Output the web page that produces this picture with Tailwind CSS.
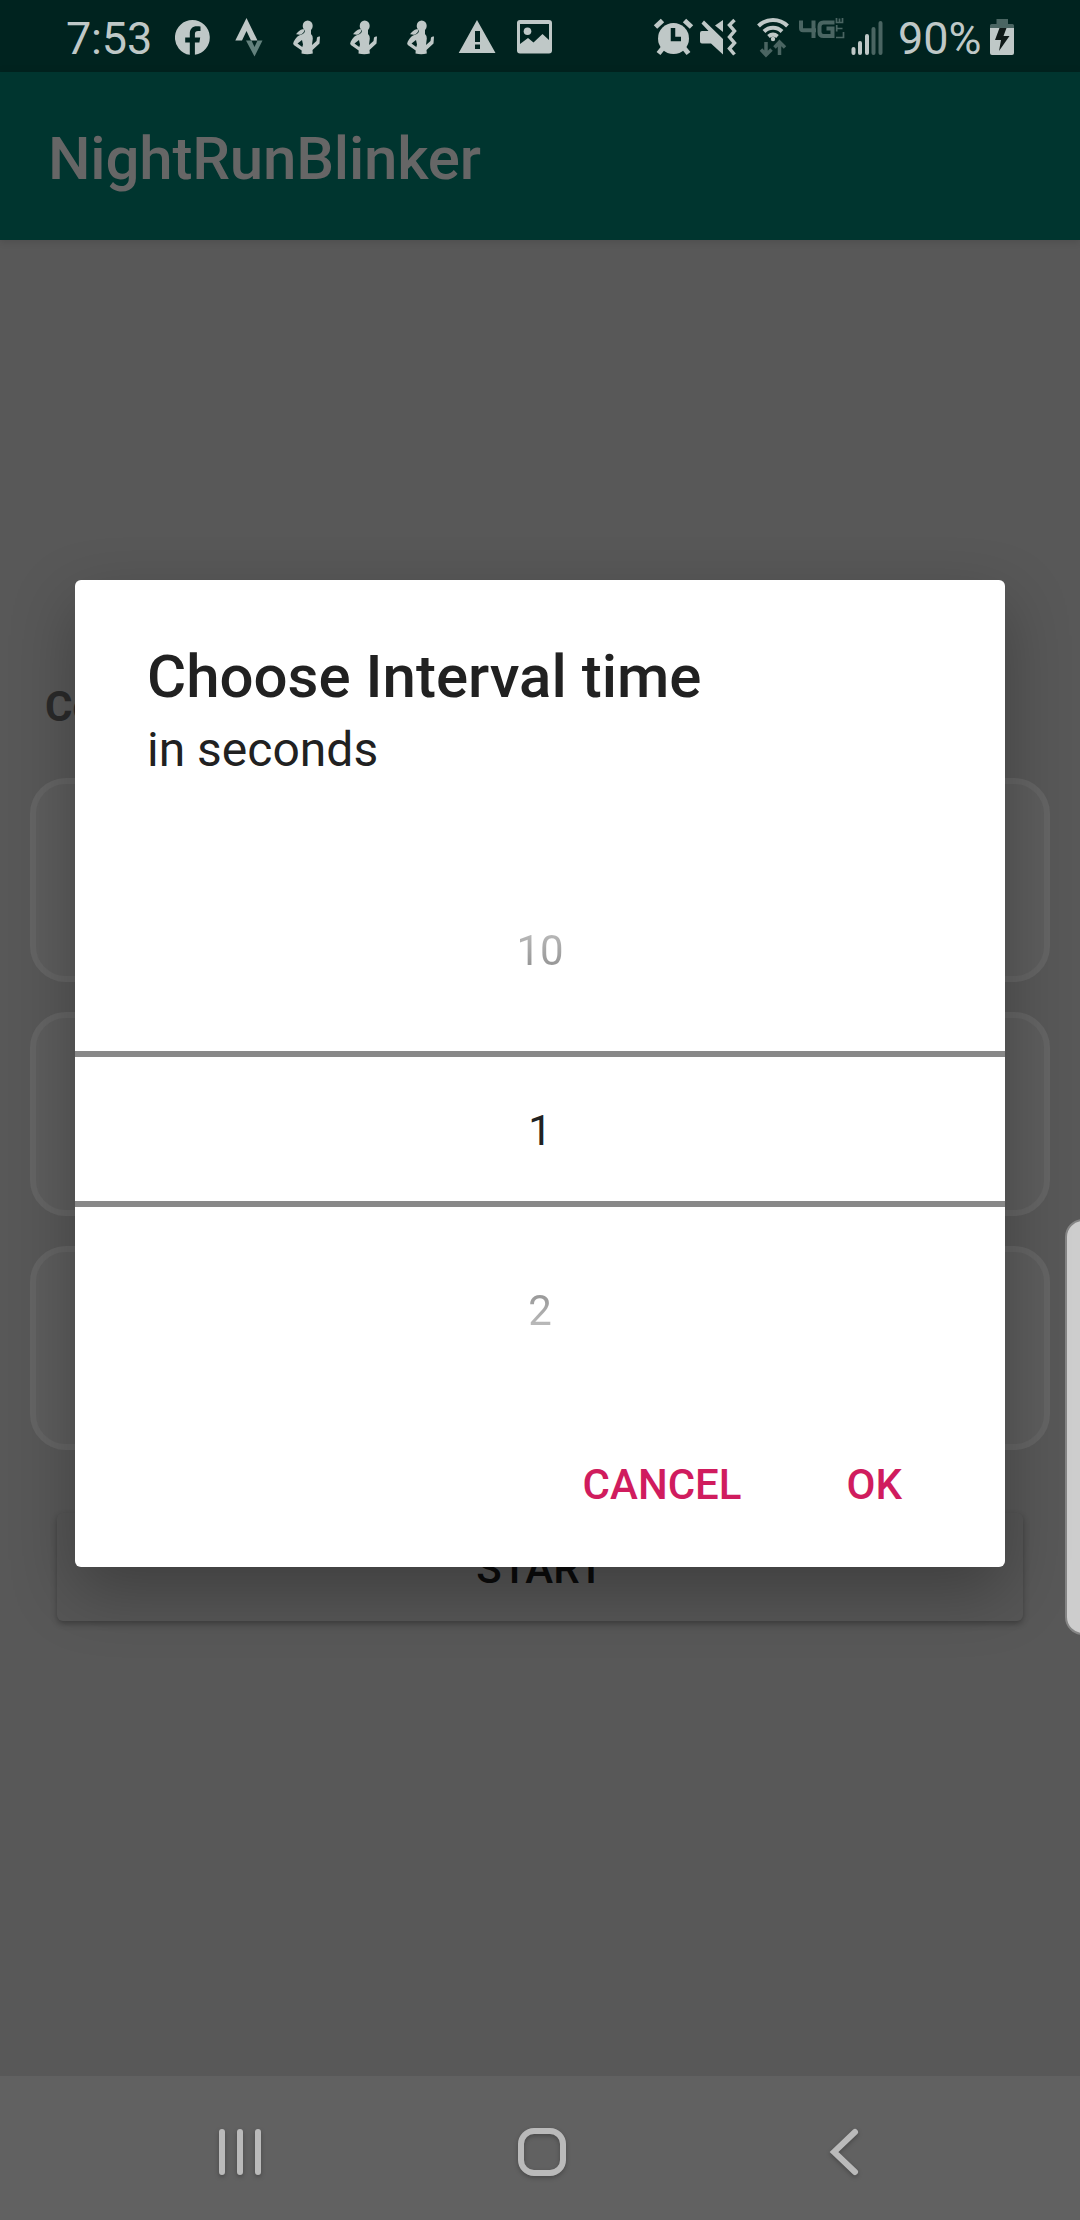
<!DOCTYPE html>
<html lang="en">
<head>
<meta charset="utf-8">
<title>NightRunBlinker</title>
<script src="https://cdn.jsdelivr.net/npm/@tailwindcss/browser@4"></script>
</head>
<body class="w-[1080px] h-[2220px] overflow-hidden bg-[#585858] font-[Roboto,sans-serif]">
<div class="relative flex h-[2220px] w-[1080px] flex-col overflow-hidden">
  <!-- Status bar -->
  <header class="flex h-[72px] shrink-0 bg-[#00231f] text-[#bfc8c7]">
    <div class="flex pl-[66px] w-[640px]">
      <span class="w-[109px] text-[45px] leading-[77px] tracking-[-0.2px]">7:53</span>
      <svg class="w-[465px] h-[72px] shrink-0" viewBox="175 0 465 72" fill="#bfc8c7">
        <path d="M192.500 20a17.500 17.500 0 0 0-2.700 34.800V42.500h-4.600v-5h4.600v-4c0-4.600 2.700-7.200 7-7.200 1.300 0 2.700.1 3.700.3v4.500h-2.400c-2.200 0-3.200 1.200-3.200 2.900v3.500h5.300l-.8 5h-4.500v12.300A17.500 17.500 0 0 0 192.500 20z"/>
        <path d="M246.500 18l11 22.500h-6.500l-4.500-9.500-4.500 9.500h-6.700z"/>
        <path fill="#63817d" d="M246 40.500h5.500l3 6.500 3-6.500h5l-8 16z"/>
        <defs>
          <g id="runner">
            <ellipse cx="14.700" cy="5.400" rx="5" ry="5.400"/>
            <path d="M10.500 8.500l1 1.500c-1 2.500-3 4.300-5 4.200-1.200 0-2-.8-3.500-.4 1.500-2 3.500-4.600 7.500-5.300z"/>
            <path fill-rule="evenodd" d="M12 9h6v4.500q2 1.500 1.800 4.500l-.8 6.500 4.500-4 .5-3.500q1.500-1.500 3-1l-.5 7-7 6.500.3 3.500q-5.500 1.300-11.300 0l.2-3L.8 24.500Q-.5 23 .8 21 4 15 8 14.200 12 13.500 12 9zM9 19.500l-4.500 3.600 4.800 3.400.7-2.500z"/>
          </g>
        </defs>
        <use href="#runner" x="293" y="20.500"/>
        <use href="#runner" x="350" y="20.500"/>
        <use href="#runner" x="407" y="20.500"/>
        <path fill-rule="evenodd" d="M477 20L495.500 53h-36.800zM475 31v11h5V31zm0 13.500v4.500h5v-4.500z"/>
        <path fill-rule="evenodd" d="M520 20h29q3 0 3 3v27.500q0 3-3 3h-29q-3 0-3-3V23q0-3 3-3zm0 4v20l8-6 5.500 4.500 9-8.500 6.500 6V24z"/>
        <circle cx="527.500" cy="31.200" r="3.800"/>
      </svg>
    </div>
    <svg class="h-[72px] w-[255px] shrink-0" viewBox="640 0 255 72" fill="#bfc8c7">
      <circle cx="673.500" cy="38.500" r="15.500"/>
      <path d="M655.500 27l7-6.500m22 0l7 6.500M663 48l-4.500 5.500M684 48l4.500 5.500" stroke="#bfc8c7" stroke-width="5" fill="none"/>
      <path d="M673 28v11h8" stroke="#00231f" stroke-width="4.500" fill="none"/>
      <path d="M704 20.500L723 39v15.500L711 43.500h-9q-2 0-2-2V33q0-2 2-2h6.500l-7-7.500zM723 20v12l-8-6.500z"/>
      <path d="M734.500 20l-5 5 5 6-5 6 5 6-5 5.500 5 6" stroke="#bfc8c7" stroke-width="3.500" fill="none"/>
      <g fill="none" stroke="#bfc8c7" stroke-width="4">
        <path d="M758.500 26c8-8 21-8 29 0M764 31.500c5-5 13-5 18 0M768.500 36.500c3-2.500 6-2.500 9 0"/>
      </g>
      <circle cx="773" cy="39" r="2.200"/>
      <path d="M766 42v13m-5-5.500l5 5.500 5.500-5.500M779.500 55V42m-5 5.500l5-5.500 5.500 5.500" stroke="#4a6562" stroke-width="3.500" fill="none"/>
      <g fill="none" stroke="#4a6562" stroke-width="4">
        <path d="M801 20.500v7.700q0 2 2 2h13M813.500 20.500V38M834.500 22.500h-11q-4 0-4 4V32q0 4 4 4h9v-7.500h-6"/>
      </g>
      <path d="M836 37.500h7.500v-5.500M836 28.500h6.500M836.700 25v6.500M836.500 18v4.500h6V18m-3 4.500v-4" stroke="#4a6562" stroke-width="1.700" fill="none"/>
      <g stroke-width="4" stroke-linecap="round">
        <path d="M853.500 49v4M860 43v10M867 36v17" stroke="#bfc8c7"/>
        <path d="M873.500 29v24M880.500 23v30" stroke="#4a6562"/>
      </g>
    </svg>
    <span class="ml-[3px] w-[89px] text-[45px] leading-[77px] tracking-[-0.1px]">90%</span>
    <svg class="h-[72px] w-[40px]" viewBox="987 0 40 72">
      <path fill="#4a6562" d="M996.500 19H1008v5h4.500q1.500 0 1.500 1.500V28h-24v-2.500q0-1.500 1.500-1.500h5z"/>
      <path fill="#bfc8c7" d="M990 28h24v25q0 2-2 2h-20q-2 0-2-2z"/>
      <path fill="#101a18" d="M999.500 28h7l-3 8h6l-10.500 15 2-11h-6z"/>
    </svg>
  </header>
  <!-- App bar -->
  <div class="flex h-[168px] shrink-0 items-center bg-[#00352f] pl-[48px] pt-[5px] shadow-[0_1px_8px_rgba(0,0,0,0.15)]">
    <h1 class="text-[60px] font-medium leading-[70px] tracking-[-0.2px] text-[#666]">NightRunBlinker</h1>
  </div>
  <!-- Activity content behind the dialog -->
  <main class="flex flex-1 flex-col px-[30px] pt-[442px]">
    <p class="pl-[15px] text-[42px] font-bold leading-[50px] text-[#2a2a2a]">Co</p>
    <div class="mt-[46px] flex flex-col gap-[30px]">
      <div class="h-[204px] rounded-[36px] border-[6px] border-[#646464] bg-[#5d5d5d]"></div>
      <div class="h-[204px] rounded-[36px] border-[6px] border-[#646464] bg-[#5d5d5d]"></div>
      <div class="h-[204px] rounded-[36px] border-[6px] border-[#646464] bg-[#5d5d5d]"></div>
    </div>
    <button class="mx-[27px] mt-[63px] h-[108px] rounded-[6px] bg-[#565656] pt-[2px] text-[42px] font-medium text-[#0b0b0b] shadow-[0_3px_6px_rgba(0,0,0,0.3)]">START</button>
  </main>
  <!-- Navigation bar -->
  <nav class="flex h-[144px] shrink-0 items-center bg-[#616161]">
    <svg class="h-[144px] w-[1080px]" viewBox="0 0 1080 144" fill="none" stroke="#bababa" stroke-width="6">
      <g class="drop-shadow-[0_2px_2px_rgba(0,0,0,0.25)]">
        <path d="M222 56v40M240 56v40M258 56v40" stroke-linecap="round"/>
        <rect x="521" y="55" width="42" height="42" rx="13"/>
        <path d="M855 56L834 76l21 20" stroke-linecap="round"/>
      </g>
    </svg>
  </nav>
  <!-- Edge panel handle -->
  <div class="absolute left-[1065px] top-[1219px] h-[416px] w-[40px] rounded-[18px] border-2 border-[#858585] bg-[#cdcdcd]"></div>
  <!-- Dialog -->
  <div role="dialog" class="absolute left-[75px] top-[580px] flex h-[987px] w-[930px] flex-col rounded-[6px] bg-white text-[#212121] shadow-[0_24px_64px_rgba(0,0,0,0.28)]">
    <h2 class="mt-[62px] pl-[72px] text-[60px] font-medium leading-[70px]">Choose Interval time</h2>
    <p class="mt-[10px] pl-[72px] text-[48px] leading-[56px]">in seconds</p>
    <div class="mt-[93px] flex flex-col text-center text-[42px]">
      <div class="h-[180px] bg-linear-to-b from-[#b8b8b8] from-35% to-[#929292] to-55% bg-clip-text leading-[160px] text-transparent">10</div>
      <div class="h-[156px] border-y-[6px] border-[#888] leading-[148px]">1</div>
      <div class="h-[180px] bg-linear-to-b from-[#929292] from-45% to-[#b8b8b8] to-65% bg-clip-text leading-[208px] text-transparent">2</div>
    </div>
    <div class="mt-[73px] flex justify-end gap-[105px] pr-[103px] text-[42px] font-medium leading-[50px] text-[#d01c5e]">
      <span>CANCEL</span><span>OK</span>
    </div>
  </div>
</div>
</body>
</html>
